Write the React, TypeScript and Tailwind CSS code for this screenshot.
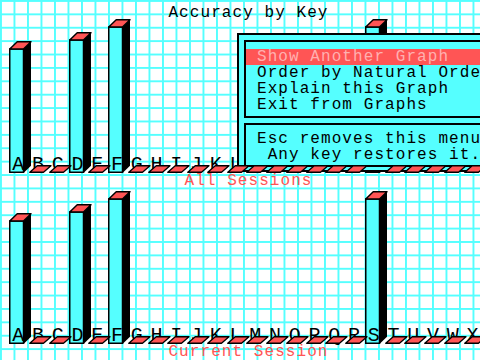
import React from "react";

const LETTERS = "ABCDEFGHIJKLMNOPQRSTUVWX".split("");
const W = 14.5;
const D = 7.5;
const T = 8;

function Bar({ h }: { h: number }) {
  const H = h + T;
  return (
    <svg width={24} height={H} viewBox={`0 0 24 ${H}`} className="block overflow-visible">
      <polygon points={`${W},${T} ${W + D},0.75 ${W + D},${h + 0.75} ${W},${H}`} fill="#000" />
      <rect x={0.75} y={T} width={W - 0.75} height={h - 0.75} fill="#55ffff" stroke="#000" strokeWidth={1.5} />
      <polygon points={`0.75,${T} ${W},${T} ${W + D},0.75 ${D + 0.75},0.75`} fill="#ff5555" stroke="#000" strokeWidth={1.5} strokeLinejoin="round" />
    </svg>
  );
}

function Flat() {
  return (
    <svg width={24} height={T} viewBox={`0 0 24 ${T}`} className="relative z-10 block overflow-visible">
      <polygon points={`0.75,${T - 0.75} ${W},${T - 0.75} ${W + D},0.75 ${D + 0.75},0.75`} fill="#ff5555" stroke="#000" strokeWidth={1.3} strokeLinejoin="round" />
    </svg>
  );
}

function Chart({ values, height, visible }: { values: Record<string, number>; height: string; visible: number }) {
  return (
    <div className={`flex items-end pl-[9.25px] shrink-0 ${height}`}>
      {LETTERS.map((l, i) => {
        const v = values[l] ?? 0;
        return (
          <div key={l} className="relative w-[19.75px] shrink-0 flex flex-col justify-end">
            {v > 0 ? <Bar h={v} /> : <Flat />}
            {i < visible ? (
              <span className="absolute left-[3px] bottom-[1px] w-[12px] text-center text-[20px] leading-[14px] text-black">
                {l}
              </span>
            ) : null}
          </div>
        );
      })}
    </div>
  );
}

export default function App() {
  return (
    <div className="relative w-[480px] h-[360px] overflow-hidden bg-white bg-[linear-gradient(to_right,#55ffff_2px,transparent_2px),linear-gradient(to_bottom,#55ffff_2px,transparent_2px)] bg-[length:13.5px_13.4px] font-['Liberation_Mono',monospace] text-[16px] tracking-[1.07px] flex flex-col">
      <div className="h-[21px] pt-[5px] pl-[17px] leading-[16px] text-center text-black whitespace-pre shrink-0">
        Accuracy by Key
      </div>
      <Chart values={{ A: 124, D: 133, F: 146, S: 146 }} height="h-[152px]" visible={12} />
      <div className="h-[17px] pl-[17px] leading-[16px] text-center text-[#ff5555] whitespace-pre shrink-0">
        All Sessions
      </div>
      <Chart values={{ A: 123, D: 132, F: 145, S: 145 }} height="h-[154px]" visible={24} />
      <div className="h-[16px] pl-[17px] leading-[16px] text-center text-[#ff5555] whitespace-pre shrink-0">
        Current Session
      </div>

      <div className="absolute left-[237px] top-[33px] w-[260px] h-[139px] bg-[#55ffff] border-2 border-black pl-[5px] pt-[5px] text-black">
        <div className="h-[78px] border-2 border-black pt-[7px]">
          <div className="h-[16px] leading-[16px] pl-[11px] bg-[#ff5555] text-[#ffb0b0] whitespace-pre">Show Another Graph</div>
          <div className="h-[16px] leading-[16px] pl-[11px] whitespace-pre">Order by Natural Order</div>
          <div className="h-[16px] leading-[16px] pl-[11px] whitespace-pre">Explain this Graph</div>
          <div className="h-[16px] leading-[16px] pl-[11px] whitespace-pre">Exit from Graphs</div>
        </div>
        <div className="mt-[5px] h-[44px] border-2 border-black pt-[6px] pl-[11px]">
          <div className="h-[16px] leading-[16px] whitespace-pre">Esc removes this menu</div>
          <div className="h-[16px] leading-[16px] whitespace-pre"> Any key restores it.</div>
        </div>
      </div>
    </div>
  );
}
